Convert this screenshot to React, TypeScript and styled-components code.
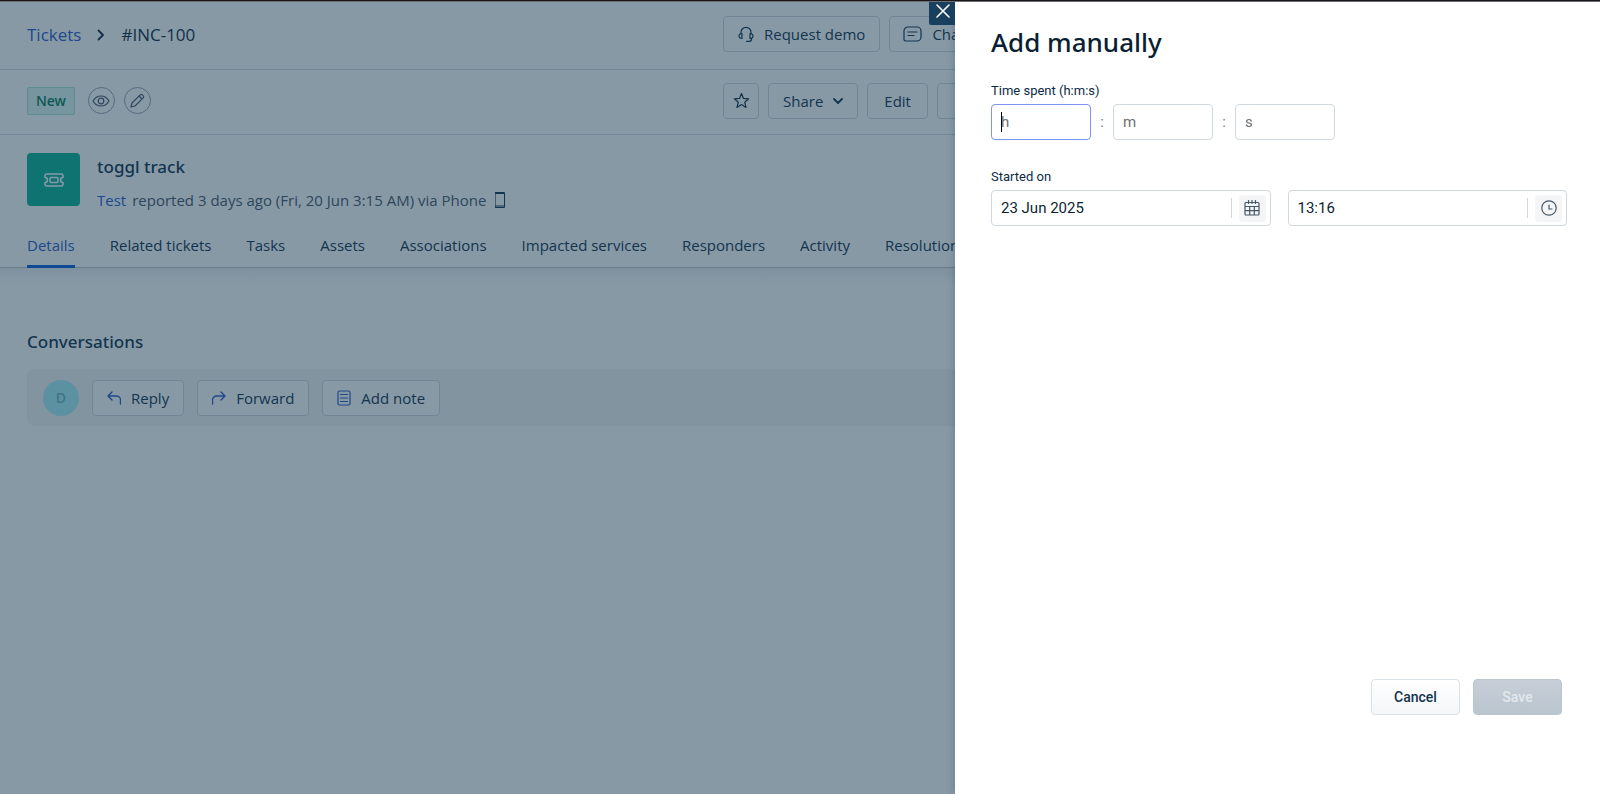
import React from "react";
import styled, { createGlobalStyle } from "styled-components";

const Global = createGlobalStyle`
  *, *::before, *::after { box-sizing: border-box; }
  body { margin: 0; background: #fff; overflow-x: hidden; }
  button, input { font: inherit; color: inherit; }
  h1, h2, p { margin: 0; font-weight: 500; }
`;

const headingFont = `"Noto Sans", "Open Sans", sans-serif`;
const bodyFont = `"Open Sans", "Noto Sans", sans-serif`;
const formFont = `Roboto, "Liberation Sans", sans-serif`;

const Page = styled.div`
  position: relative;
  display: flex;
  flex-direction: column;
  min-height: 100vh;
  overflow: hidden;
  font: 400 15px/20px ${bodyFont};
  color: #12344d;
`;

const TopEdge = styled.div`
  position: relative;
  z-index: 3;
  height: 2px;
  background: linear-gradient(#1c1819 50%, #6b6f74 50%);
`;

const HeaderRow = styled.header<{ $height: number }>`
  display: grid;
  grid-template-columns: minmax(0, 1fr) 877px;
  align-items: center;
  height: ${(p) => p.$height}px;
  padding: 0 0 3px 27px;
  border-bottom: 1px solid #d3dbe0;
`;

const Cluster = styled.div<{ $gap: number }>`
  display: flex;
  align-items: center;
  gap: ${(p) => p.$gap}px;
`;

const Crumbs = styled.nav`
  display: flex;
  align-items: center;
  gap: 16px;
  padding-top: 2px;
  color: #0f2b40;
  font-size: 17px;
  font-weight: 500;
`;

const Link = styled.a`
  color: #2c5cc5;
  font-weight: 500;
  text-decoration: none;
`;

const Button = styled.button<{ $pad?: number }>`
  display: inline-flex;
  flex: none;
  align-items: center;
  gap: 10px;
  height: 36px;
  padding: 0 ${(p) => p.$pad ?? 14}px;
  border: 1px solid #cfd7df;
  border-radius: 4px;
  background: #fff;
  font-weight: 500;
  white-space: nowrap;
`;

const IconOnly = styled(Button)`
  justify-content: center;
  width: 36px;
  padding: 0;
`;

const ActionIcon = styled.span`
  display: flex;
  color: #2c5cc5;
`;

const Badge = styled.span`
  height: 28px;
  padding: 0 8px;
  margin-right: 4px;
  border: 1px solid #a4e4d3;
  border-radius: 2px;
  background: #dcf6ef;
  color: #00795b;
  font-family: ${headingFont};
  font-size: 14px;
  font-weight: 500;
  line-height: 26px;
`;

const RoundButton = styled.button`
  display: grid;
  place-items: center;
  width: 27px;
  height: 27px;
  padding: 0;
  border: 1px solid #92a2b1;
  border-radius: 50%;
  background: none;
  color: #475867;
`;

const Summary = styled.section`
  display: flex;
  gap: 17px;
  padding: 18px 27px 0;
`;

const TicketTile = styled.div`
  display: grid;
  place-items: center;
  width: 53px;
  height: 53px;
  border-radius: 4px;
  background: #0cb294;
  color: #fff;
`;

const Subject = styled.h1`
  font-family: ${headingFont};
  font-size: 17px;
  line-height: 28px;
`;

const Meta = styled.p`
  display: flex;
  align-items: center;
  gap: 6px;
  margin-top: 9px;
  color: #475867;
  font-weight: 400;
  svg { margin-left: 3px; color: #12344d; }
`;

const Tabs = styled.nav`
  display: flex;
  gap: 35px;
  height: 51px;
  margin-top: 7px;
  padding: 0 27px;
  border-bottom: 1px solid #b9c6cd;
  white-space: nowrap;
`;

const Tab = styled.a<{ $active?: boolean }>`
  height: 51px;
  padding-top: 18px;
  border-bottom: 3px solid ${(p) => (p.$active ? "#0860d8" : "transparent")};
  color: ${(p) => (p.$active ? "#2c5cc5" : "#12344d")};
  font-weight: 500;
  text-decoration: none;
`;

const Conversations = styled.section`
  padding: 61px 0 0 27px;
  background: linear-gradient(#ebeff0, #fff 18px);
`;

const SectionTitle = styled.h2`
  font-family: ${headingFont};
  font-size: 17px;
  line-height: 26px;
`;

const ReplyBar = styled.div`
  display: flex;
  align-items: center;
  gap: 13px;
  height: 57px;
  margin-top: 14px;
  padding: 0 16px;
  border-radius: 8px 0 0 8px;
  background: #f3f4f3;
`;

const Avatar = styled.span`
  width: 36px;
  height: 36px;
  border-radius: 50%;
  background: #a6eef6;
  color: #73b4c6;
  font-size: 14px;
  font-weight: 600;
  line-height: 36px;
  text-align: center;
`;

const Scrim = styled.div`
  position: absolute;
  inset: 0;
  z-index: 1;
  background: rgba(18, 52, 77, 0.5);
`;

const Drawer = styled.aside`
  position: absolute;
  inset: 0 0 0 auto;
  z-index: 2;
  display: flex;
  flex-direction: column;
  width: 645px;
  max-width: 100%;
  padding: 28px 33px 79px 36px;
  background: #fff;
  box-shadow: 0 0 8px rgba(18, 52, 77, 0.3);
  font: 400 15px/20px ${formFont};
`;

const CloseButton = styled.button`
  position: absolute;
  top: 0;
  right: 100%;
  display: flex;
  justify-content: center;
  width: 26px;
  height: 25px;
  padding: 4px 0 0 2px;
  border: 0;
  border-radius: 0 0 0 2px;
  background: #183f5e;
  color: #fff;
`;

const DrawerTitle = styled.h2`
  margin-bottom: 27px;
  font: 500 26px/28px ${headingFont};
  color: #0b1f33;
`;

const Group = styled.fieldset`
  min-width: 0;
  margin: 0 0 29px;
  padding: 0;
  border: 0;
`;

const Legend = styled.legend`
  padding: 0;
  margin-bottom: 5px;
  color: #0b2c46;
  font-size: 13px;
  line-height: 16px;
`;

const TimeRow = styled.div`
  display: flex;
  align-items: center;
  color: #6f7c87;
`;

const Colon = styled.span`
  width: 22px;
  text-align: center;
`;

const TimeField = styled.div`
  position: relative;
  width: 100px;
`;

const Caret = styled.i`
  position: absolute;
  top: 8px;
  left: 10px;
  width: 1px;
  height: 20px;
  background: #000;
`;

const TimeInput = styled.input`
  display: block;
  width: 100%;
  height: 36px;
  padding: 0 9px;
  border: 1px solid #cfd7df;
  border-radius: 4px;
  outline: 0;
  color: #12344d;
  caret-color: transparent;
  &::placeholder { color: #6b7075; opacity: 1; }
  &:focus { border: 1px solid #7c93f5; }
`;

const DateRow = styled.div`
  display: grid;
  grid-template-columns: 1fr 1fr;
  gap: 17px;
`;

const Picker = styled.div`
  display: flex;
  align-items: center;
  height: 36px;
  padding: 0 4px 0 9px;
  border: 1px solid #cfd7df;
  border-radius: 4px;
`;

const PickerInput = styled.input`
  flex: 1;
  min-width: 0;
  height: 20px;
  padding: 0;
  border: 0;
  border-right: 1px solid #cfd7df;
  outline: 0;
  background: none;
  color: #0b1f33;
`;

const PickerButton = styled.button`
  display: grid;
  place-items: center;
  width: 27px;
  height: 27px;
  margin-left: 7px;
  padding: 0;
  border: 0;
  border-radius: 4px;
  background: #f3f5f7;
  color: #475867;
`;

const Footer = styled.footer`
  display: flex;
  justify-content: flex-end;
  gap: 13px;
  margin-top: auto;
  padding-right: 5px;
`;

const FooterButton = styled.button`
  width: 89px;
  height: 36px;
  border: 1px solid #dae1e7;
  border-radius: 4px;
  background: linear-gradient(#fff, #f4f6f8);
  font-size: 14px;
  font-weight: 500;
  &:disabled {
    border-color: #bcc6cf;
    background: linear-gradient(#c7ced8, #bac5ce);
    color: #e3e8ed;
  }
`;

const Svg = ({ w = 16, h = 16, sw = 1.2, children }: { w?: number; h?: number; sw?: number; children: React.ReactNode }) => (
  <svg width={w} height={h} viewBox={`0 0 ${w} ${h}`} fill="none" stroke="currentColor" strokeWidth={sw} strokeLinecap="round" strokeLinejoin="round" aria-hidden="true">
    {children}
  </svg>
);

const tabs = ["Details", "Related tickets", "Tasks", "Assets", "Associations", "Impacted services", "Responders", "Activity", "Resolution"];

export default function App() {
  return (
    <Page>
      <Global />
      <TopEdge />
      <HeaderRow $height={68}>
        <Crumbs aria-label="Breadcrumb">
          <Link href="#tickets">Tickets</Link>
          <Svg w={8} h={12} sw={1.8}><path d="M1.500 1.500 6 6l-4.500 4.500" /></Svg>
          <span>#INC-100</span>
        </Crumbs>
        <Cluster $gap={9}>
          <Button>
            <Svg w={16} h={17}>
              <path d="M3 8V6.300a5 5 0 0 1 10 0V8M13.500 12.500v.8a2 2 0 0 1-2 2H8.500" />
              <path d="M4 7.500v5c-1.800 0-3-1-3-2.500s1.200-2.500 3-2.500ZM12 7.500v5c1.800 0 3-1 3-2.500s-1.200-2.500-3-2.500Z" />
            </Svg>
            Request demo
          </Button>
          <Button $pad={13}>
            <Svg w={19} h={16}>
              <path d="M5 1h9a4 4 0 0 1 4 4v6a4 4 0 0 1-4 4H2.500A1.500 1.500 0 0 1 1 13.500V5a4 4 0 0 1 4-4ZM5 6h9M5 9.500h6" />
            </Svg>
            Chat
          </Button>
        </Cluster>
      </HeaderRow>
      <HeaderRow $height={65}>
        <Cluster $gap={9}>
          <Badge>New</Badge>
          <RoundButton aria-label="Watch">
            <Svg w={18} h={14}><path d="M1 7c2-3.500 5-5 8-5s6 1.500 8 5c-2 3.500-5 5-8 5S3 10.500 1 7Z" /><circle cx="9" cy="7" r="2.800" /></Svg>
          </RoundButton>
          <RoundButton aria-label="Edit status">
            <Svg><path d="m2 14 1-4L11.200 1.800a1.500 1.500 0 0 1 2.200 0l.8.8a1.500 1.500 0 0 1 0 2.200L6 13l-4 1ZM10 3l3 3" /></Svg>
          </RoundButton>
        </Cluster>
        <Cluster $gap={9}>
          <IconOnly aria-label="Favourite">
            <Svg w={17} h={17}><path d="m8.500 1.500 2 4.900 5.200.4-4 3.400 1.300 5.200-4.500-2.800L4 15.400l1.300-5.200-4-3.400 5.200-.4Z" /></Svg>
          </IconOnly>
          <Button>Share<Svg w={10} h={8} sw={1.8}><path d="m1 2 4 4 4-4" /></Svg></Button>
          <Button $pad={16}>Edit</Button>
          <IconOnly aria-label="More" />
        </Cluster>
      </HeaderRow>
      <Summary>
        <TicketTile>
          <Svg w={20} h={14} sw={1.5}>
            <path d="M3 1h14a2 2 0 0 1 2 2v1.500a2.500 2.500 0 0 0 0 5V11a2 2 0 0 1-2 2H3a2 2 0 0 1-2-2V9.500a2.500 2.500 0 0 0 0-5V3a2 2 0 0 1 2-2Z" />
            <rect x="6" y="4.500" width="8" height="5" rx="1" />
          </Svg>
        </TicketTile>
        <div>
          <Subject>toggl track</Subject>
          <Meta>
            <Link href="#requester">Test</Link>
            reported 3 days ago (Fri, 20 Jun 3:15 AM) via Phone
            <Svg w={10} h={16} sw={1}><path d="M.5.5h9v15h-9ZM.5 1.500h9M.5 14h9" /></Svg>
          </Meta>
        </div>
      </Summary>
      <Tabs aria-label="Ticket sections">
        {tabs.map((t, i) => (
          <Tab key={t} href={"#" + t.toLowerCase().replace(" ", "-")} $active={i === 0}>{t}</Tab>
        ))}
      </Tabs>
      <Conversations>
        <SectionTitle>Conversations</SectionTitle>
        <ReplyBar>
          <Avatar>D</Avatar>
          <Button>
            <ActionIcon><Svg w={14} h={14} sw={1.4}><path d="M5 1 1 5l4 4M1 5h8.500a4 4 0 0 1 4 4v4" /></Svg></ActionIcon>
            Reply
          </Button>
          <Button>
            <ActionIcon><Svg w={14} h={14} sw={1.4}><path d="m9 1 4 4-4 4M13 5H4.500a4 4 0 0 0-4 4v4" /></Svg></ActionIcon>
            Forward
          </Button>
          <Button>
            <ActionIcon><Svg w={14} h={16} sw={1.2}><rect x="1" y="1" width="12" height="14" rx="1.500" /><path d="M3.500 4.500h7M3.500 8h7M3.500 11.500h7" /></Svg></ActionIcon>
            Add note
          </Button>
        </ReplyBar>
      </Conversations>
      <Scrim />
      <Drawer role="dialog" aria-label="Add manually">
        <CloseButton aria-label="Close"><Svg w={14} h={14} sw={1.6}><path d="m1 1 12 12M13 1 1 13" /></Svg></CloseButton>
        <DrawerTitle>Add manually</DrawerTitle>
        <Group>
          <Legend>Time spent (h:m:s)</Legend>
          <TimeRow>
            <TimeField>
              <TimeInput aria-label="Hours" placeholder="h" autoFocus />
              <Caret />
            </TimeField>
            <Colon>:</Colon>
            <TimeField><TimeInput aria-label="Minutes" placeholder="m" /></TimeField>
            <Colon>:</Colon>
            <TimeField><TimeInput aria-label="Seconds" placeholder="s" /></TimeField>
          </TimeRow>
        </Group>
        <Group>
          <Legend>Started on</Legend>
          <DateRow>
            <Picker>
              <PickerInput aria-label="Start date" defaultValue="23 Jun 2025" />
              <PickerButton aria-label="Open calendar">
                <Svg><path d="M2 2.500h12a1 1 0 0 1 1 1V14a1 1 0 0 1-1 1H2a1 1 0 0 1-1-1V3.500a1 1 0 0 1 1-1ZM4.500.5v3M8 .5v3M11.500.5v3M1 6.500h14M1 10.700h14M5.700 6.500V15M10.300 6.500V15" /></Svg>
              </PickerButton>
            </Picker>
            <Picker>
              <PickerInput aria-label="Start time" defaultValue="13:16" />
              <PickerButton aria-label="Open time list">
                <Svg><circle cx="8" cy="8" r="7.200" /><path d="M8 5v4h3" /></Svg>
              </PickerButton>
            </Picker>
          </DateRow>
        </Group>
        <Footer>
          <FooterButton>Cancel</FooterButton>
          <FooterButton disabled>Save</FooterButton>
        </Footer>
      </Drawer>
    </Page>
  );
}
